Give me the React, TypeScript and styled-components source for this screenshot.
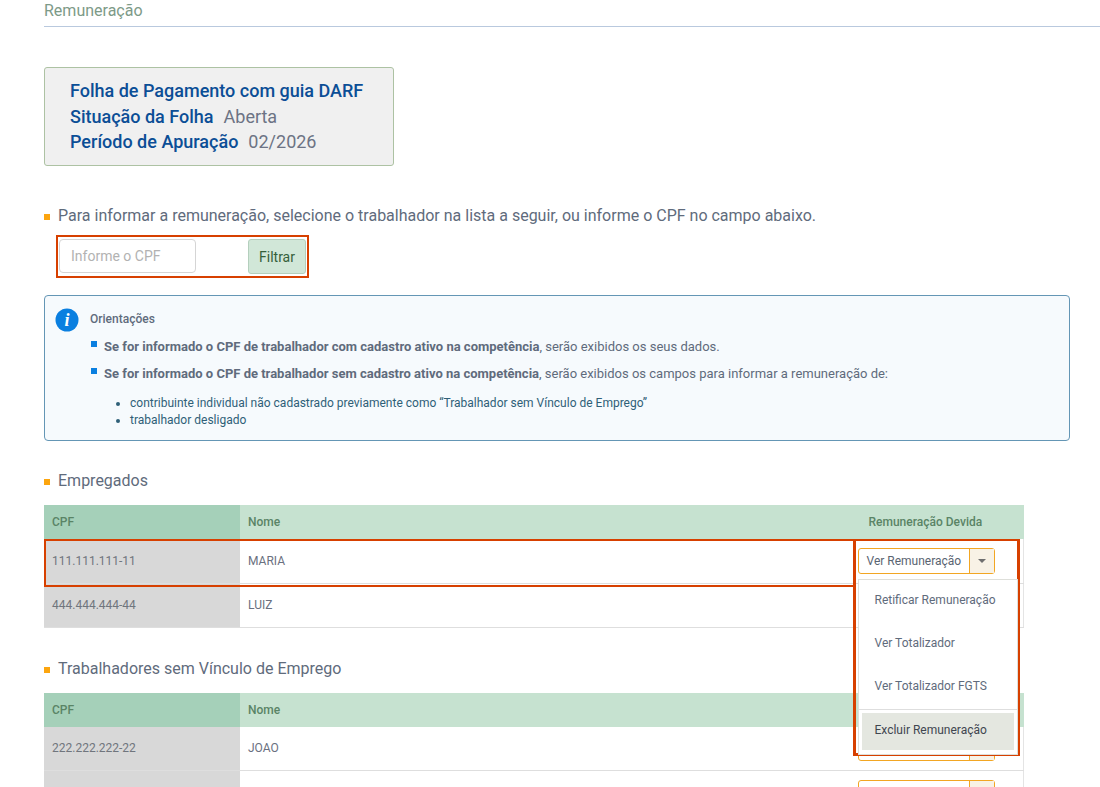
import styled, { createGlobalStyle } from "styled-components";

const GlobalStyle = createGlobalStyle`
  * { box-sizing: border-box; }
  html, body { margin: 0; height: 100%; overflow: hidden; background: #fff; }
  body { font-family: Roboto, "Liberation Sans", sans-serif; color: #5f6b7c; }
`;

const employees = [
  { cpf: "111.111.111-11", name: "MARIA", highlighted: true },
  { cpf: "444.444.444-44", name: "LUIZ" },
];

const others = [
  { cpf: "222.222.222-22", name: "JOAO" },
  { cpf: "", name: "" },
];

type Worker = { cpf: string; name: string; highlighted?: boolean };

function WorkersTable({ rows, open }: { rows: Worker[]; open?: boolean }) {
  return (
    <Table>
      <thead>
        <tr>
          <CpfHead>CPF</CpfHead>
          <NameHead>Nome</NameHead>
          <ActionHead>Remuneração Devida</ActionHead>
        </tr>
      </thead>
      <tbody>
        {rows.map((row, i) => (
          <tr key={i}>
            <CpfCell>
              {row.cpf}
              {row.highlighted && <RowMark />}
            </CpfCell>
            <NameCell>{row.name}</NameCell>
            <ActionCell>
              {(i === 0 || !open) && (
                <SplitButton>
                  <MainAction>Ver Remuneração</MainAction>
                  <Caret>
                    <CaretIcon />
                  </Caret>
                </SplitButton>
              )}
              {open && i === 0 && (
                <MenuArea>
                  <Menu>
                    <MenuItem>Retificar Remuneração</MenuItem>
                    <MenuItem>Ver Totalizador</MenuItem>
                    <MenuItem>Ver Totalizador FGTS</MenuItem>
                    <MenuDivider />
                    <DangerItem>Excluir Remuneração</DangerItem>
                  </Menu>
                </MenuArea>
              )}
            </ActionCell>
          </tr>
        ))}
      </tbody>
    </Table>
  );
}

export default function App() {
  return (
    <Page>
      <GlobalStyle />
      <PageTitle>Remuneração</PageTitle>

      <SummaryCard>
        <SummaryLine>
          <strong>Folha de Pagamento com guia DARF</strong>
        </SummaryLine>
        <SummaryLine>
          <strong>Situação da Folha</strong>
          <span>Aberta</span>
        </SummaryLine>
        <SummaryLine>
          <strong>Período de Apuração</strong>
          <span>02/2026</span>
        </SummaryLine>
      </SummaryCard>

      <Intro>
        Para informar a remuneração, selecione o trabalhador na lista a seguir, ou informe o CPF no campo abaixo.
      </Intro>

      <FilterBox>
        <CpfInput placeholder="Informe o CPF" />
        <FilterButton>Filtrar</FilterButton>
      </FilterBox>

      <InfoBox>
        <InfoIcon>
          <svg width="24" height="24" viewBox="0 0 24 24">
            <circle cx="12" cy="12" r="11.5" fill="#0a7fe0" />
            <text
              x="12"
              y="18"
              textAnchor="middle"
              fontFamily="Liberation Serif, serif"
              fontStyle="italic"
              fontWeight="700"
              fontSize="18"
              fill="#fff"
            >
              i
            </text>
          </svg>
        </InfoIcon>
        <InfoBody>
          <InfoTitle>Orientações</InfoTitle>
          <InfoList>
            <InfoItem>
              <b>Se for informado o CPF de trabalhador com cadastro ativo na competência</b>, serão exibidos os seus dados.
            </InfoItem>
            <InfoItem>
              <b>Se for informado o CPF de trabalhador sem cadastro ativo na competência</b>, serão exibidos os campos para informar a remuneração de:
            </InfoItem>
          </InfoList>
          <SubList>
            <li>contribuinte individual não cadastrado previamente como “Trabalhador sem Vínculo de Emprego”</li>
            <li>trabalhador desligado</li>
          </SubList>
        </InfoBody>
      </InfoBox>

      <SectionTitle>Empregados</SectionTitle>
      <WorkersTable rows={employees} open />

      <SecondTitle>Trabalhadores sem Vínculo de Emprego</SecondTitle>
      <WorkersTable rows={others} />
    </Page>
  );
}

const Page = styled.div`
  padding-left: 44px;
  height: 787px;
  overflow: hidden;
`;

const PageTitle = styled.h1`
  margin: 0;
  height: 27px;
  padding-top: 1px;
  font-size: 16px;
  line-height: 19px;
  font-weight: 400;
  color: #7d9a88;
  border-bottom: 1px solid #b9c9de;
`;

const SummaryCard = styled.div`
  width: 350px;
  height: 99px;
  margin-top: 40px;
  padding: 10px 25px;
  background: #f0f0f0;
  border: 1px solid #adc2a3;
  border-radius: 3px;
`;

const SummaryLine = styled.div`
  display: flex;
  gap: 10px;
  font-size: 18px;
  line-height: 25.5px;

  strong {
    font-weight: 500;
    color: #0b4e96;
  }

  span {
    color: #6c7384;
  }
`;

const Intro = styled.p`
  position: relative;
  margin: 40px 0 0;
  padding-left: 14px;
  font-size: 16px;
  line-height: 19px;
  color: #5f6b7c;

  &::before {
    content: "";
    position: absolute;
    left: 0;
    top: 8px;
    width: 6px;
    height: 6px;
    background: #fca50f;
  }
`;

const FilterBox = styled.div`
  display: flex;
  justify-content: space-between;
  width: 253px;
  height: 43px;
  margin: 10px 0 0 12px;
  padding: 2px 1px 0 1px;
  border: 2px solid #d74000;
`;

const CpfInput = styled.input`
  width: 137px;
  height: 34px;
  padding: 0 11px;
  font: 400 14px Roboto, sans-serif;
  background: #fff;
  border: 1px solid #d5d5d5;
  border-radius: 4px;
  outline: none;

  &::placeholder {
    color: #b2b2b2;
    opacity: 1;
  }
`;

const FilterButton = styled.button`
  width: 58px;
  height: 35px;
  padding: 0;
  font: 400 14px Roboto, sans-serif;
  color: #35603b;
  background: #d1e7d8;
  border: 1px solid #b4cfbd;
  border-radius: 3px;
`;

const InfoBox = styled.section`
  display: flex;
  gap: 11px;
  width: 1026px;
  height: 146px;
  margin-top: 17px;
  padding: 12px 10px;
  background: #f6fafd;
  border: 1px solid #6496b5;
  border-radius: 4px;
`;

const InfoIcon = styled.div`
  flex: none;
  width: 24px;
  height: 24px;
  line-height: 0;
`;

const InfoBody = styled.div`
  flex: 1;
  min-width: 0;
`;

const InfoTitle = styled.div`
  font-size: 12px;
  font-weight: 500;
  line-height: 14px;
  padding-top: 4px;
  color: #5f6b7c;
`;

const InfoList = styled.ul`
  margin: 13px 0 0;
  padding: 0;
  list-style: none;
`;

const InfoItem = styled.li`
  position: relative;
  margin-bottom: 12px;
  padding-left: 14px;
  font-size: 13px;
  line-height: 15px;
  color: #5f6b7c;

  b {
    font-weight: 700;
  }

  &::before {
    content: "";
    position: absolute;
    left: 1px;
    top: 2px;
    width: 6px;
    height: 6px;
    background: #0a7fe0;
  }
`;

const SubList = styled.ul`
  margin: 14px 0 0;
  padding-left: 40px;
  font-size: 12px;
  line-height: 17px;
  color: #2f5f78;
`;

const SectionTitle = styled(Intro)`
  margin-top: 30px;
`;

const SecondTitle = styled(Intro)`
  margin-top: 31px;
`;

const Table = styled.table`
  position: relative;
  width: 980px;
  margin-top: 15px;
  border-collapse: collapse;
  table-layout: fixed;
  font-size: 12px;
`;

const HeadCell = styled.th`
  height: 34px;
  padding: 0 8px;
  font-size: 12px;
  font-weight: 500;
  text-align: left;
  color: #5a8466;
  background: #c6e2d0;
`;

const CpfHead = styled(HeadCell)`
  width: 196px;
  background: #a5d0b9;
`;

const NameHead = styled(HeadCell)``;

const ActionHead = styled(HeadCell)`
  width: 168px;
  padding: 0 0 0 13px;
  white-space: nowrap;
`;

const CpfCell = styled.td`
  position: relative;
  height: 44px;
  padding: 0 8px;
  color: #70757d;
  background: #d8d8d8;
  border-bottom: 1px solid #dedede;
`;

const NameCell = styled.td`
  padding: 0 8px;
  color: #6a7080;
  border-bottom: 1px solid #dedede;
`;

const ActionCell = styled.td`
  position: relative;
  padding: 0 0 0 1px;
  border-bottom: 1px solid #dedede;
  border-right: 1px solid #e4e4e4;
`;

const RowMark = styled.span`
  position: absolute;
  left: 0;
  top: 0;
  width: 812px;
  height: 48px;
  border: 2px solid #d74000;
  border-right: 0;
  z-index: 2;
`;

const SplitButton = styled.div`
  display: flex;
  width: 137px;
  height: 26px;
  margin-left: 1px;
  background: #fff;
  border: 1px solid #f2a623;
  border-radius: 3px;
`;

const MainAction = styled.span`
  flex: 1;
  padding-left: 8px;
  font-size: 12px;
  line-height: 24px;
  color: #5a6472;
`;

const Caret = styled.span`
  display: flex;
  align-items: center;
  justify-content: center;
  width: 25px;
  background: #f8f2e6;
  border-left: 1px solid #f2a623;
`;

const CaretIcon = styled.span`
  width: 0;
  height: 0;
  border-left: 4px solid transparent;
  border-right: 4px solid transparent;
  border-top: 4px solid #6f6f6f;
`;

const MenuArea = styled.div`
  position: absolute;
  left: -3px;
  top: 0;
  width: 167px;
  height: 217px;
  padding: 38px 0 0 3px;
  border: 3px solid #d74000;
  border-top-width: 2px;
  z-index: 3;
`;

const Menu = styled.div`
  width: 160px;
  height: 176px;
  margin-left: -1px;
  padding-bottom: 3px;
  background: #fff;
  border: 1px solid #dedfda;
  font-size: 12px;
`;

const MenuItem = styled.div`
  height: 43px;
  padding-left: 16px;
  line-height: 41px;
  color: #5f6b7c;
`;

const MenuDivider = styled.div`
  height: 1px;
  margin-bottom: 3px;
  background: #dedede;
`;

const DangerItem = styled.div`
  height: 37px;
  margin: 0 3px;
  padding-left: 13px;
  line-height: 35px;
  color: #3f4650;
  background: #e4e7e0;
`;
